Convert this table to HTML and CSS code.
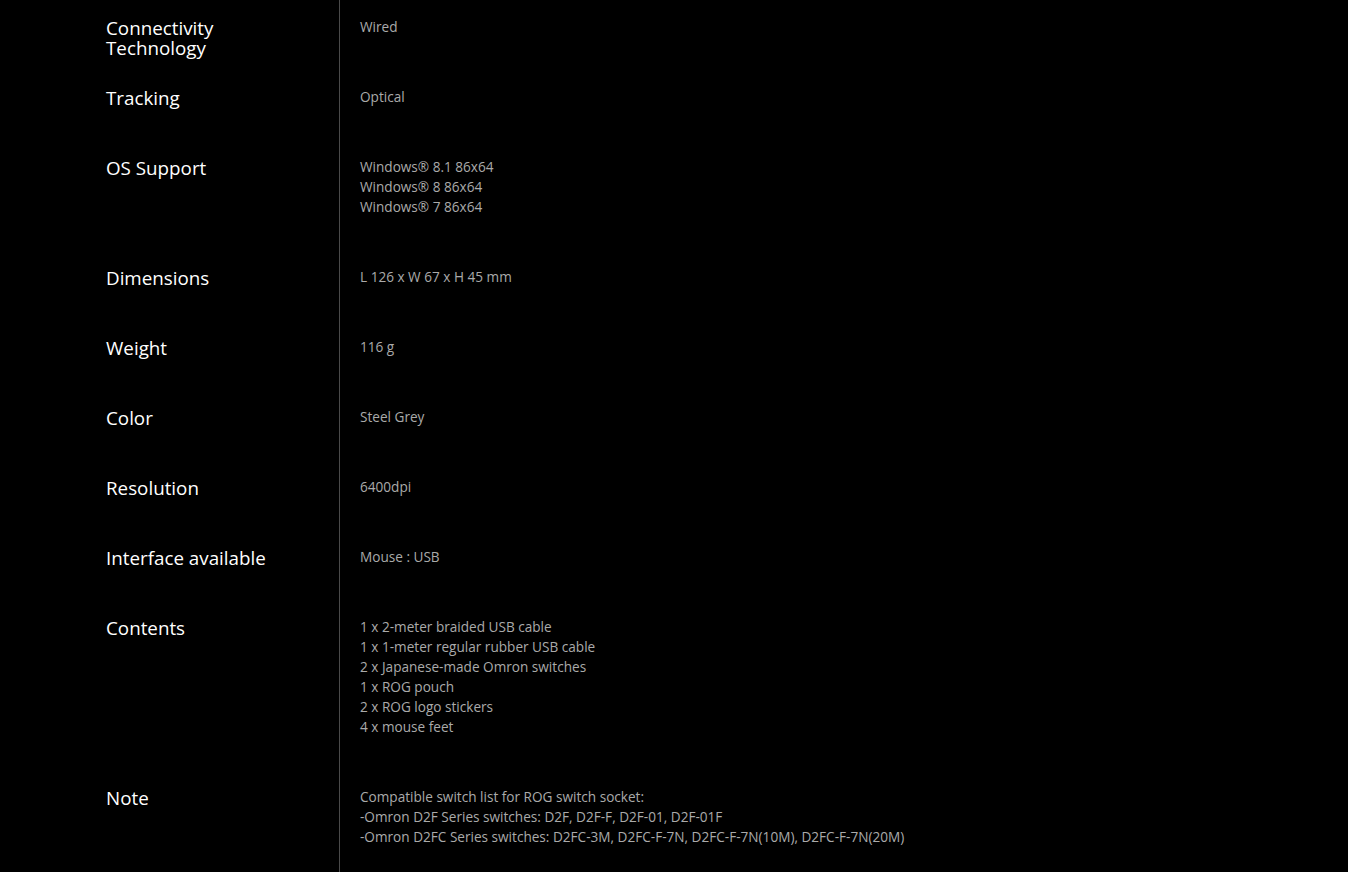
FILE: index.html
```html
<!DOCTYPE html>
<html lang="en">
<head>
    <meta charset="UTF-8">
    <title>Specifications</title>
    <link rel="stylesheet" href="styles.css">
</head>
<body>
    <div class="specs">
        <div class="spec-row">
            <div class="spec-label">Connectivity<br>Technology</div>
            <div class="spec-value">Wired</div>
        </div>
        <div class="spec-row">
            <div class="spec-label">Tracking</div>
            <div class="spec-value">Optical</div>
        </div>
        <div class="spec-row">
            <div class="spec-label">OS Support</div>
            <div class="spec-value">Windows® 8.1 86x64<br>Windows® 8 86x64<br>Windows® 7 86x64</div>
        </div>
        <div class="spec-row">
            <div class="spec-label">Dimensions</div>
            <div class="spec-value">L 126 x W 67 x H 45 mm</div>
        </div>
        <div class="spec-row">
            <div class="spec-label">Weight</div>
            <div class="spec-value">116 g</div>
        </div>
        <div class="spec-row">
            <div class="spec-label">Color</div>
            <div class="spec-value">Steel Grey</div>
        </div>
        <div class="spec-row">
            <div class="spec-label">Resolution</div>
            <div class="spec-value">6400dpi</div>
        </div>
        <div class="spec-row">
            <div class="spec-label">Interface available</div>
            <div class="spec-value">Mouse : USB</div>
        </div>
        <div class="spec-row">
            <div class="spec-label">Contents</div>
            <div class="spec-value">1 x 2-meter braided USB cable<br>1 x 1-meter regular rubber USB cable<br>2 x Japanese-made Omron switches<br>1 x ROG pouch<br>2 x ROG logo stickers<br>4 x mouse feet</div>
        </div>
        <div class="spec-row">
            <div class="spec-label">Note</div>
            <div class="spec-value">Compatible switch list for ROG switch socket:<br>-Omron D2F Series switches: D2F, D2F-F, D2F-01, D2F-01F<br>-Omron D2FC Series switches: D2FC-3M, D2FC-F-7N, D2FC-F-7N(10M), D2FC-F-7N(20M)</div>
        </div>
    </div>
</body>
</html>
```

FILE: styles.css
```css
body {
    margin: 0;
    padding: 0;
    background: #000;
    font-family: "Open Sans", "Noto Sans", sans-serif;
}
.specs {
    padding-top: 17px;
    min-height: 855px;
    background: linear-gradient(to right, transparent 339px, #4a4a4a 339px, #4a4a4a 340px, transparent 340px);
}
.spec-row {
    display: grid;
    grid-template-columns: 360px 1fr;
}
.spec-label {
    padding: 1px 0 0 106px;
    font-size: 18.8px;
    line-height: 20px;
    color: #fff;
}
.spec-value {
    padding-bottom: 50px;
    font-size: 13.6px;
    line-height: 20px;
    color: #aaa;
}
```
